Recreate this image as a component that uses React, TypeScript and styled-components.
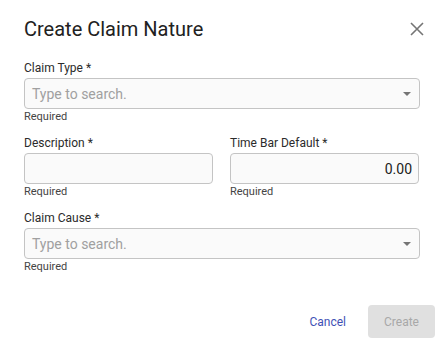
import React from "react";
import styled, { createGlobalStyle } from "styled-components";

const GlobalStyle = createGlobalStyle`
  html, body {
    margin: 0;
    padding: 0;
    background: #ffffff;
  }
  * {
    box-sizing: border-box;
  }
  body {
    font-family: Roboto, "Liberation Sans", Arial, sans-serif;
  }
`;

const App = () => {
  return (
    <>
      <GlobalStyle />
      <Dialog>
        <Header>
          <Title>Create Claim Nature</Title>
          <CloseButton aria-label="close">
            <svg width="14" height="14" viewBox="0 0 14 14">
              <path d="M1 1 L13 13 M13 1 L1 13" stroke="#757575" strokeWidth="1.6" fill="none" />
            </svg>
          </CloseButton>
        </Header>

        <Form>
          <Field>
            <Label>Claim Type *</Label>
            <InputBox>
              <Placeholder>Type to search.</Placeholder>
              <Caret />
            </InputBox>
            <Helper>Required</Helper>
          </Field>

          <Row>
            <Field>
              <Label>Description *</Label>
              <InputBox />
              <Helper>Required</Helper>
            </Field>
            <Field>
              <Label>Time Bar Default *</Label>
              <InputBox align="right">
                <Value>0.00</Value>
              </InputBox>
              <Helper>Required</Helper>
            </Field>
          </Row>

          <Field>
            <Label>Claim Cause *</Label>
            <InputBox>
              <Placeholder>Type to search.</Placeholder>
              <Caret />
            </InputBox>
            <Helper>Required</Helper>
          </Field>
        </Form>

        <Footer>
          <TextButton>Cancel</TextButton>
          <PrimaryButton disabled>Create</PrimaryButton>
        </Footer>
      </Dialog>
    </>
  );
};

export default App;

const Dialog = styled.div`
  width: 443px;
  height: 347px;
  background: #fff;
  border-radius: 4px;
  display: flex;
  flex-direction: column;
  padding: 17px 8px 9px 24px;
`;

const Header = styled.div`
  display: flex;
  align-items: center;
  justify-content: space-between;
  height: 24px;
  padding-right: 11px;
  margin-bottom: 20px;
`;

const Title = styled.h2`
  margin: 0;
  font-size: 20px;
  line-height: 24px;
  font-weight: 400;
  color: #212121;
`;

const CloseButton = styled.button`
  border: none;
  background: none;
  padding: 0;
  width: 14px;
  height: 14px;
  display: flex;
  cursor: pointer;
`;

const Form = styled.div`
  display: flex;
  flex-direction: column;
  gap: 13px;
  width: 396px;
  flex: 1;
`;

const Row = styled.div`
  display: grid;
  grid-template-columns: 189px 189px;
  column-gap: 17px;
`;

const Field = styled.div`
  display: flex;
  flex-direction: column;
`;

const Label = styled.label`
  font-size: 12px;
  line-height: 14px;
  color: #2b2b2b;
  margin-bottom: 3px;
`;

const InputBox = styled.div<{ align?: string }>`
  height: 31px;
  border: 1px solid #c4c4c4;
  border-radius: 4px;
  background: #fafafa;
  display: flex;
  align-items: center;
  justify-content: ${({ align }) => (align === "right" ? "flex-end" : "space-between")};
  padding: 0 ${({ align }) => (align === "right" ? "6px" : "8px")} 0 7px;
`;

const Placeholder = styled.span`
  font-size: 14px;
  color: #a0a0a0;
`;

const Value = styled.span`
  font-size: 14px;
  color: #212121;
`;

const Caret = styled.span`
  width: 0;
  height: 0;
  border-left: 4.5px solid transparent;
  border-right: 4.5px solid transparent;
  border-top: 4.5px solid #757575;
`;

const Helper = styled.span`
  font-size: 11px;
  line-height: 13px;
  color: #444;
  margin-top: 1px;
`;

const Footer = styled.div`
  display: flex;
  justify-content: flex-end;
  align-items: center;
  gap: 8px;
`;

const TextButton = styled.button`
  border: none;
  background: none;
  font-family: inherit;
  font-size: 12px;
  color: #3f51b5;
  height: 33px;
  padding: 0 14px;
  cursor: pointer;
`;

const PrimaryButton = styled.button`
  border: none;
  border-radius: 4px;
  background: #e0e0e0;
  color: #a8a8a8;
  font-family: inherit;
  font-size: 12px;
  width: 67px;
  height: 33px;
`;
